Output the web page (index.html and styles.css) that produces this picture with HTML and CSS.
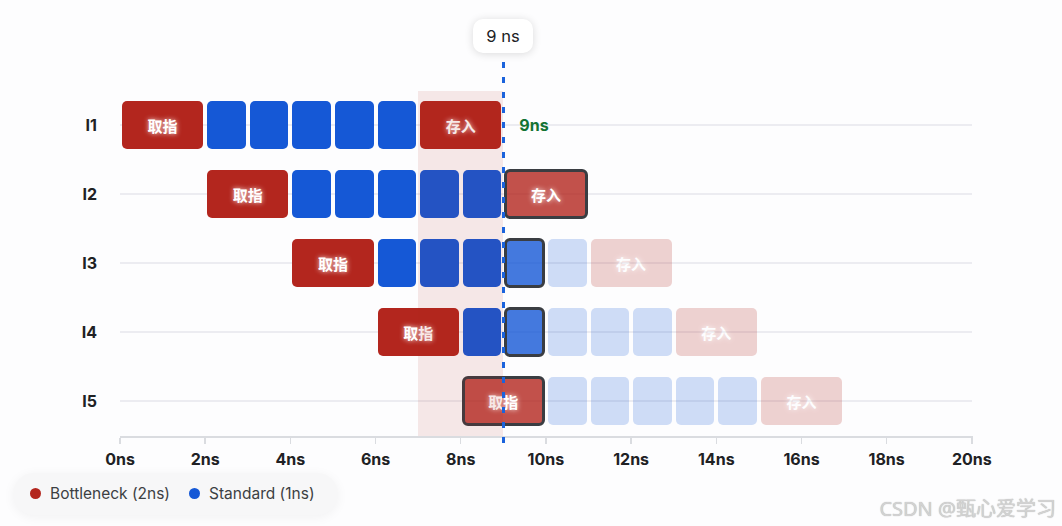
FILE: index.html
```html
<!DOCTYPE html>
<html lang="zh">
<head>
<meta charset="utf-8">
<title>Pipeline</title>
<link rel="stylesheet" href="styles.css">
</head>
<body>
<div class="chart">
  <div class="top"></div>
  <div class="plot">
    <div class="row">
      <div class="label">I1</div>
      <div class="grid-line"></div>
      <div class="blk red" style="grid-column:2 / span 2">取指</div>
      <div class="blk blue" style="grid-column:4"></div>
      <div class="blk blue" style="grid-column:5"></div>
      <div class="blk blue" style="grid-column:6"></div>
      <div class="blk blue" style="grid-column:7"></div>
      <div class="blk blue" style="grid-column:8"></div>
      <div class="blk red" style="grid-column:9 / span 2">存入</div>
      <div class="done" style="grid-column:11 / span 3">9ns</div>
    </div>
    <div class="row">
      <div class="label">I2</div>
      <div class="grid-line"></div>
      <div class="blk red" style="grid-column:4 / span 2">取指</div>
      <div class="blk blue" style="grid-column:6"></div>
      <div class="blk blue" style="grid-column:7"></div>
      <div class="blk blue" style="grid-column:8"></div>
      <div class="blk blue" style="grid-column:9"></div>
      <div class="blk blue" style="grid-column:10"></div>
      <div class="blk red active" style="grid-column:11 / span 2">存入</div>
    </div>
    <div class="row">
      <div class="label">I3</div>
      <div class="grid-line"></div>
      <div class="blk red" style="grid-column:6 / span 2">取指</div>
      <div class="blk blue" style="grid-column:8"></div>
      <div class="blk blue" style="grid-column:9"></div>
      <div class="blk blue" style="grid-column:10"></div>
      <div class="blk blue active" style="grid-column:11"></div>
      <div class="blk blue future" style="grid-column:12"></div>
      <div class="blk red future" style="grid-column:13 / span 2">存入</div>
    </div>
    <div class="row">
      <div class="label">I4</div>
      <div class="grid-line"></div>
      <div class="blk red" style="grid-column:8 / span 2">取指</div>
      <div class="blk blue" style="grid-column:10"></div>
      <div class="blk blue active" style="grid-column:11"></div>
      <div class="blk blue future" style="grid-column:12"></div>
      <div class="blk blue future" style="grid-column:13"></div>
      <div class="blk blue future" style="grid-column:14"></div>
      <div class="blk red future" style="grid-column:15 / span 2">存入</div>
    </div>
    <div class="row">
      <div class="label">I5</div>
      <div class="grid-line"></div>
      <div class="blk red active" style="grid-column:10 / span 2">取指</div>
      <div class="blk blue future" style="grid-column:12"></div>
      <div class="blk blue future" style="grid-column:13"></div>
      <div class="blk blue future" style="grid-column:14"></div>
      <div class="blk blue future" style="grid-column:15"></div>
      <div class="blk blue future" style="grid-column:16"></div>
      <div class="blk red future" style="grid-column:17 / span 2">存入</div>
    </div>
    <div class="stall"></div>
  </div>
  <div class="axis">
    <div class="axis-line"></div>
    <div class="ticks">
      <div class="tick"><span class="tick-mark"></span><span class="tick-label">0ns</span></div>
      <div class="tick"><span class="tick-mark"></span><span class="tick-label">2ns</span></div>
      <div class="tick"><span class="tick-mark"></span><span class="tick-label">4ns</span></div>
      <div class="tick"><span class="tick-mark"></span><span class="tick-label">6ns</span></div>
      <div class="tick"><span class="tick-mark"></span><span class="tick-label">8ns</span></div>
      <div class="tick"><span class="tick-mark"></span><span class="tick-label">10ns</span></div>
      <div class="tick"><span class="tick-mark"></span><span class="tick-label">12ns</span></div>
      <div class="tick"><span class="tick-mark"></span><span class="tick-label">14ns</span></div>
      <div class="tick"><span class="tick-mark"></span><span class="tick-label">16ns</span></div>
      <div class="tick"><span class="tick-mark"></span><span class="tick-label">18ns</span></div>
      <div class="tick"><span class="tick-mark"></span><span class="tick-label">20ns</span></div>
    </div>
  </div>
  <div class="legend">
    <div class="legend-item"><span class="dot dot-red"></span>Bottleneck (2ns)</div>
    <div class="legend-item"><span class="dot dot-blue"></span>Standard (1ns)</div>
  </div>
  <div class="cursor-line"></div>
  <div class="tooltip">9 ns</div>
  <div class="watermark">CSDN @甄心爱学习</div>
</div>
</body>
</html>
```
FILE: styles.css
```css
* { box-sizing: border-box; }

html, body {
  margin: 0;
  padding: 0;
  background: #fdfdfe;
}

body {
  font-family: "Inter", "Roboto", "Noto Sans CJK SC", sans-serif;
  color: #202124;
}

.chart {
  position: relative;
  width: 1062px;
  height: 526px;
  overflow: hidden;
}

.top {
  height: 90.5px;
}

.plot {
  position: relative;
}

.row {
  display: grid;
  grid-template-columns: 120px repeat(20, 42.6px);
  grid-template-rows: 69px;
  align-items: center;
}

.label {
  grid-column: 1;
  grid-row: 1;
  text-align: right;
  padding-right: 23px;
  font-weight: 700;
  font-size: 16px;
  color: #202124;
}

.grid-line {
  grid-column: 2 / -1;
  grid-row: 1;
  height: 2px;
  background: #ececf1;
}

.blk {
  grid-row: 1;
  height: 48px;
  margin: 0 2px;
  border-radius: 5px;
  display: flex;
  align-items: center;
  justify-content: center;
  font-family: "Noto Sans CJK SC", sans-serif;
  font-weight: 700;
  font-size: 15px;
  color: #fff;
  text-shadow: 0 0 5px rgba(255, 255, 255, 0.9);
}

.red { background: #b3261e; }
.blue { background: #1558d6; }

.red.active {
  background: rgba(179, 38, 30, 0.8);
}
.blue.active {
  background: rgba(21, 88, 214, 0.8);
}
.active {
  height: 50px;
  margin: 0 1px;
  border: 3px solid #3a3d42;
  border-radius: 6px;
}

.future { opacity: 0.2; }

.done {
  grid-row: 1;
  padding-left: 16px;
  font-weight: 700;
  font-size: 16px;
  color: #137333;
}

.stall {
  position: absolute;
  top: 0;
  bottom: 0;
  left: 418.2px;
  width: 85.2px;
  background: rgba(179, 38, 30, 0.1);
  pointer-events: none;
}

.axis {
  height: 34px;
}

.axis-line {
  margin-left: 120px;
  width: 853px;
  height: 2px;
  background: #dadce0;
}

.ticks {
  display: flex;
  margin-left: 77.4px;
}

.tick {
  width: 85.2px;
  display: flex;
  flex-direction: column;
  align-items: center;
}

.tick-mark {
  width: 1.5px;
  height: 6px;
  background: #dadce0;
}

.tick-label {
  margin-top: 5px;
  font-weight: 700;
  font-size: 16px;
  line-height: 20px;
  color: #202124;
}

.legend {
  display: flex;
  align-items: center;
  gap: 19px;
  width: 325px;
  height: 42px;
  margin: 3px 0 0 13px;
  padding-left: 17px;
  border-radius: 21px;
  background: #f7f7f8;
  box-shadow: 0 2px 12px rgba(0, 0, 0, 0.05);
  font-size: 15.5px;
  color: #3c4043;
}

.legend-item {
  display: flex;
  align-items: center;
  gap: 9px;
}

.dot {
  width: 11px;
  height: 11px;
  border-radius: 50%;
}
.dot-red { background: #b3261e; }
.dot-blue { background: #1558d6; }

.cursor-line {
  position: absolute;
  left: 502px;
  top: 46.7px;
  width: 3px;
  height: 397px;
  background: repeating-linear-gradient(to bottom, #1b63dc 0 6px, transparent 6px 15px);
}

.tooltip {
  position: absolute;
  left: 473px;
  top: 19px;
  width: 60px;
  height: 34px;
  display: flex;
  align-items: center;
  justify-content: center;
  background: #fff;
  border-radius: 10px;
  box-shadow: 0 1px 8px rgba(0, 0, 0, 0.14);
  font-size: 16.5px;
  color: #202124;
}

.watermark {
  position: absolute;
  right: 6px;
  bottom: 4px;
  font-family: "Noto Sans", "Noto Sans CJK SC", sans-serif;
  font-size: 20px;
  color: #d2d2d2;
  text-shadow: 0 0 1px #aaaaaa;
}
```
